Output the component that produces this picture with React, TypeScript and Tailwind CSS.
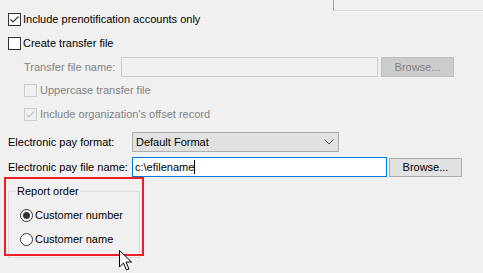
import React from "react";

function Check({ checked, disabled }: { checked?: boolean; disabled?: boolean }) {
  return (
    <div
      className={
        "w-[13px] h-[13px] shrink-0 border flex items-center justify-center " +
        (disabled ? "border-[#cccccc] bg-[#f0f0f0]" : "border-[#333333] bg-white")
      }
    >
      {checked && (
        <svg width="11" height="11" viewBox="0 0 11 11">
          <path
            d="M1.5 5.5 L4 8 L9.5 2.5"
            fill="none"
            stroke={disabled ? "#c6c6c6" : "#333333"}
            strokeWidth="1.1"
          />
        </svg>
      )}
    </div>
  );
}

function Radio({ checked }: { checked?: boolean }) {
  return (
    <div className="w-[13px] h-[13px] shrink-0 rounded-full border border-[#333333] bg-white flex items-center justify-center">
      {checked && <div className="w-[7px] h-[7px] rounded-full bg-[#333333]" />}
    </div>
  );
}

export default function App() {
  return (
    <div
      className="relative w-[483px] h-[273px] overflow-hidden bg-[#f0f0f0] text-[11px] leading-none text-black whitespace-nowrap"
      style={{ fontFamily: '"Liberation Sans", Arial, sans-serif' }}
    >
      {/* cut-off panel corner */}
      <div className="ml-[333px] h-[11px] w-[160px] border-l border-b border-l-[#a0a0a0] border-b-[#dcdcdc]" />

      {/* Row A */}
      <div className="mt-[2px] h-[13px] ml-[8px] flex items-center gap-[2px]">
        <Check checked />
        <span>Include prenotification accounts only</span>
      </div>

      {/* Row B */}
      <div className="mt-[11px] h-[13px] ml-[8px] flex items-center gap-[2px]">
        <Check />
        <span>Create transfer file</span>
      </div>

      {/* Row C */}
      <div className="mt-[7px] h-[20px] ml-[24px] flex items-center text-[#838383]">
        <span className="w-[97px]">Transfer file name:</span>
        <div className="w-[257px] h-[20px] border border-[#cccccc] bg-[#f0f0f0]" />
        <div className="ml-[3px] w-[73px] h-[20px] border border-[#bfbfbf] bg-[#cccccc] flex items-center justify-center">
          Browse...
        </div>
      </div>

      {/* Row D */}
      <div className="mt-[7px] h-[13px] ml-[24px] flex items-center gap-[3px] text-[#838383]">
        <Check disabled />
        <span>Uppercase transfer file</span>
      </div>

      {/* Row E */}
      <div className="mt-[11px] h-[13px] ml-[24px] flex items-center gap-[3px] text-[#838383]">
        <Check checked disabled />
        <span>Include organization's offset record</span>
      </div>

      {/* Row F */}
      <div className="mt-[11px] h-[20px] ml-[8px] flex items-center">
        <span className="w-[124px]">Electronic pay format:</span>
        <div className="w-[207px] h-[20px] border border-[#adadad] bg-[#e1e1e1] flex items-center pl-[3px] pr-[4px]">
          <span className="flex-1">Default Format</span>
          <svg width="10" height="6" viewBox="0 0 10 6">
            <path d="M0.5 0.5 L5 5 L9.5 0.5" fill="none" stroke="#555555" strokeWidth="1" />
          </svg>
        </div>
      </div>

      {/* Row G */}
      <div className="mt-[5px] h-[20px] ml-[8px] flex items-center">
        <span className="w-[124px]">Electronic pay file name:</span>
        <div className="w-[255px] h-[20px] border border-[#0078d7] bg-white flex items-center pl-[2px]">
          <span>c:\efilename</span>
          <div className="w-[1px] h-[14px] bg-black" />
        </div>
        <div className="ml-[2px] w-[73px] h-[19px] border border-[#adadad] bg-[#e1e1e1] flex items-center justify-center">
          Browse...
        </div>
      </div>

      {/* Group box with annotation */}
      <div className="relative pt-[7px]">
        <fieldset className="ml-[8px] w-[132px] h-[74px] border border-[#dcdcdc] px-[7px]">
          <legend className="px-[1px] leading-[15px]">Report order</legend>
          <div className="mt-[10px] ml-[4px] h-[13px] flex items-center gap-[2px]">
            <Radio checked />
            <span>Customer number</span>
          </div>
          <div className="mt-[11px] ml-[4px] h-[13px] flex items-center gap-[2px]">
            <Radio />
            <span>Customer name</span>
          </div>
        </fieldset>
        <div className="absolute left-[4px] top-[0px] w-[140px] h-[79px] border-2 border-[#ee1c25]" />
      </div>

      {/* mouse cursor */}
      <svg className="absolute left-[119px] top-[250px]" width="14" height="22" viewBox="0 0 14 22">
        <path
          d="M0.5 0.5 L0.5 17 L4.5 13 L7.5 20 L10 19 L7 12 L12.5 12 Z"
          fill="white"
          stroke="black"
          strokeWidth="1"
          strokeLinejoin="miter"
        />
      </svg>
    </div>
  );
}
